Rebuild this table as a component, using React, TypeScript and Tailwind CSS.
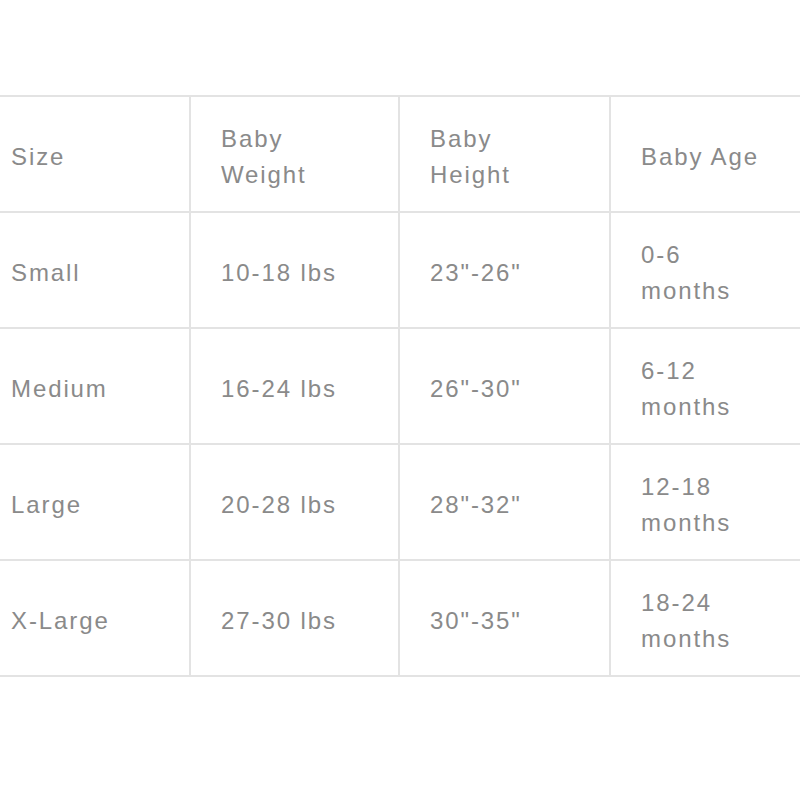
import React from 'react';

const rows = [
  { size: 'Small', weight: '10-18 lbs', height: '23"-26"', age: ['0-6', 'months'] },
  { size: 'Medium', weight: '16-24 lbs', height: '26"-30"', age: ['6-12', 'months'] },
  { size: 'Large', weight: '20-28 lbs', height: '28"-32"', age: ['12-18', 'months'] },
  { size: 'X-Large', weight: '27-30 lbs', height: '30"-35"', age: ['18-24', 'months'] },
];

const cell = 'border-2 border-[#e3e3e3] h-[116px] pl-[30px] pr-[20px] pt-[5px] pb-0 align-middle text-left font-normal';

export default function App() {
  return (
    <div
      className="w-[800px] h-[800px] bg-white overflow-hidden pt-[95px] text-[#8a8a8a] text-[24px] leading-[36px] tracking-[1.9px]"
      style={{ fontFamily: '"Liberation Sans", Arial, sans-serif' }}
    >
      <table className="border-collapse w-[840px] ml-[-21px] table-fixed">
        <colgroup>
          <col className="w-[210px]" />
          <col className="w-[209px]" />
          <col className="w-[211px]" />
          <col className="w-[210px]" />
        </colgroup>
        <thead>
          <tr>
            <th className={cell}>Size</th>
            <th className={cell}>Baby<br />Weight</th>
            <th className={cell}>Baby<br />Height</th>
            <th className={cell}>Baby Age</th>
          </tr>
        </thead>
        <tbody>
          {rows.map((r) => (
            <tr key={r.size}>
              <td className={cell}>{r.size}</td>
              <td className={cell}>{r.weight}</td>
              <td className={cell}>{r.height}</td>
              <td className={cell}>
                {r.age[0]}
                <br />
                {r.age[1]}
              </td>
            </tr>
          ))}
        </tbody>
      </table>
    </div>
  );
}
